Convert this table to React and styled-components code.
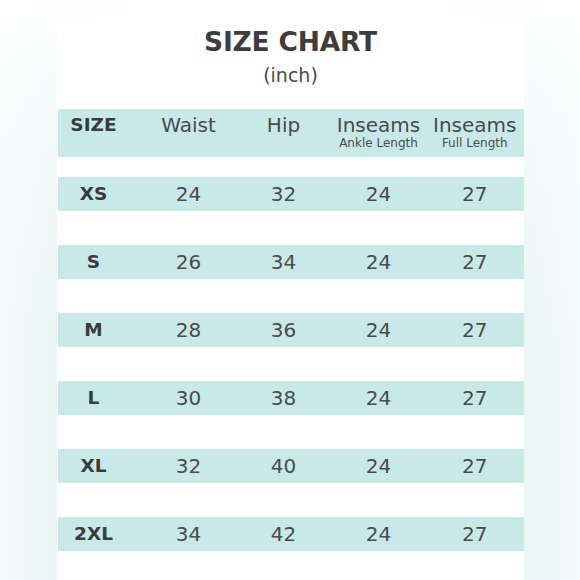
import React from 'react';
import styled, { createGlobalStyle } from 'styled-components';

const GlobalStyle = createGlobalStyle`
  html, body {
    margin: 0;
    padding: 0;
  }
  body {
    font-family: "DejaVu Sans", "Liberation Sans", sans-serif;
    color: #3c3d3d;
  }
`;

const Page = styled.div`
  width: 580px;
  height: 580px;
  overflow: hidden;
  display: flex;
  justify-content: center;
  background:
    linear-gradient(180deg, rgba(255,255,255,0.95) 0%, rgba(255,255,255,0.4) 25%, rgba(255,255,255,0) 60%),
    linear-gradient(90deg, #f4fafa 0%, #e8f4f4 12%, #f1f8f8 25%, #f1f8f8 75%, #e8f4f4 88%, #f4fafa 100%);
`;

const Card = styled.div`
  width: 467px;
  margin-top: 20px;
  background: #fff;
  display: flex;
  flex-direction: column;
  align-items: stretch;
  padding-left: 1px;
  box-sizing: border-box;
`;

const Title = styled.h1`
  margin: 6px 0 0;
  font-size: 26.5px;
  line-height: 32px;
  font-weight: 700;
  text-align: center;
  letter-spacing: -0.2px;
`;

const Unit = styled.div`
  font-size: 19px;
  line-height: 24px;
  font-weight: 400;
  color: #4a4b4b;
  text-align: center;
  margin-top: 5px;
`;

const Row = styled.div`
  display: grid;
  grid-template-columns: 83.5px 95px 95px 95px 97.5px;
  background: #c9e9e9;
  height: ${p => (p.$head ? 48 : 34)}px;
  margin-top: ${p => p.$gap}px;
  align-items: ${p => (p.$head ? 'start' : 'center')};
  box-sizing: border-box;
  padding-top: ${p => (p.$head ? 4 : 0)}px;
`;

const Cell = styled.div`
  display: flex;
  flex-direction: column;
  align-items: center;
  padding-right: ${p => (p.$first ? 11.5 : 0)}px;
  font-size: ${p => (p.$bold ? 18.5 : 20)}px;
  line-height: 24px;
  font-weight: ${p => (p.$bold ? 700 : 400)};
  color: ${p => (p.$bold ? '#3a3b3b' : '#4a4b4b')};
  white-space: nowrap;
`;

const Sub = styled.span`
  font-size: 12px;
  line-height: 13px;
  font-weight: 400;
`;

const rows = [
  ['XS', 24, 32, 24, 27],
  ['S', 26, 34, 24, 27],
  ['M', 28, 36, 24, 27],
  ['L', 30, 38, 24, 27],
  ['XL', 32, 40, 24, 27],
  ['2XL', 34, 42, 24, 27],
];

export default function App() {
  return (
    <>
      <GlobalStyle />
      <Page>
        <Card>
          <Title>SIZE CHART</Title>
          <Unit>(inch)</Unit>
          <Row $head $gap={22}>
            <Cell $first $bold>SIZE</Cell>
            <Cell>Waist</Cell>
            <Cell>Hip</Cell>
            <Cell>Inseams<Sub>Ankle Length</Sub></Cell>
            <Cell>Inseams<Sub>Full Length</Sub></Cell>
          </Row>
          {rows.map((r, i) => (
            <Row key={r[0]} $gap={i === 0 ? 20 : 34}>
              <Cell $first $bold>{r[0]}</Cell>
              {r.slice(1).map((v, j) => (
                <Cell key={j}>{v}</Cell>
              ))}
            </Row>
          ))}
        </Card>
      </Page>
    </>
  );
}
